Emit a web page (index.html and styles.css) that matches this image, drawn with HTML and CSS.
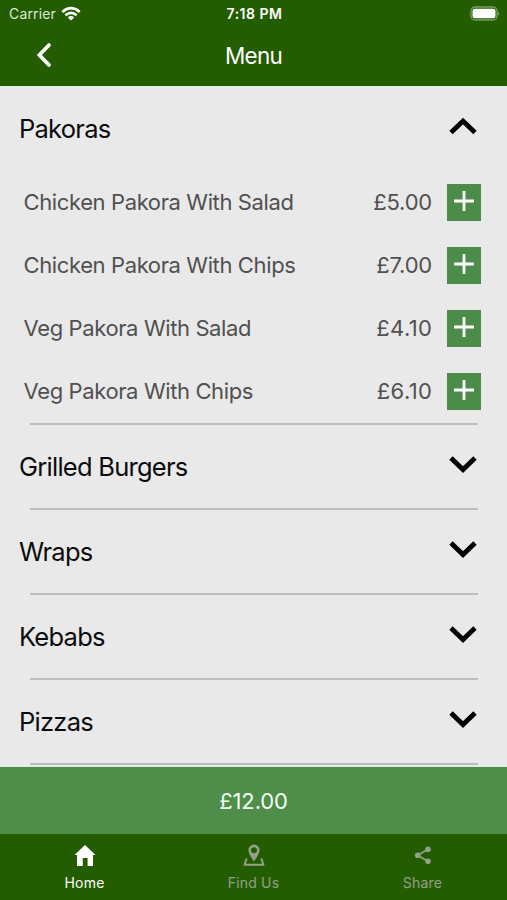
FILE: index.html
```html
<!DOCTYPE html>
<html lang="en">
<head>
<meta charset="utf-8">
<title>Menu</title>
<link rel="stylesheet" href="styles.css">
</head>
<body>
<div class="app">
  <header class="header">
    <div class="status">
      <div class="carrier"><span>Carrier</span>
        <svg width="20" height="16" viewBox="0 0 20 16"><g fill="none" stroke="#fff" stroke-width="2.7"><path d="M1.3 6Q10 -1.6 18.7 6"/><path d="M4.4 9.2Q10 4.6 15.6 9.2"/></g><path d="M6.8 11.4Q10 8.8 13.2 11.4L10 14.6Z" fill="#fff"/></svg>
      </div>
      <div class="time">7:18 PM</div>
      <svg class="battery" width="31" height="16" viewBox="0 0 31 16"><rect x="2" y="1" width="26" height="13" rx="4" fill="none" stroke="#76a05f" stroke-width="1.3"/><rect x="3.5" y="2.7" width="23" height="9.6" rx="2.3" fill="#fff"/><path d="M29 5.2Q31.5 7.5 29 9.8Z" fill="#76a05f"/></svg>
    </div>
    <div class="nav">
      <svg class="back" width="18" height="28" viewBox="0 0 18 28"><path d="M14 3L4.4 13L14 23" fill="none" stroke="#fff" stroke-width="3.8" stroke-linecap="round"/></svg>
      <h1>Menu</h1>
    </div>
  </header>
  <main class="list">
    <section class="group open">
      <div class="heading"><h2>Pakoras</h2><svg class="chev" viewBox="0 0 28 18"><path d="M2 15.5L14 4L26 15.5"/></svg></div>
      <div class="items">
        <div class="item"><span class="name">Chicken Pakora With Salad</span><span class="price">£5.00</span><button class="add" aria-label="Add"><svg viewBox="0 0 20 20"><path d="M10 0V20M0 10H20"/></svg></button></div>
        <div class="item"><span class="name">Chicken Pakora With Chips</span><span class="price">£7.00</span><button class="add" aria-label="Add"><svg viewBox="0 0 20 20"><path d="M10 0V20M0 10H20"/></svg></button></div>
        <div class="item"><span class="name">Veg Pakora With Salad</span><span class="price loose">£4.10</span><button class="add" aria-label="Add"><svg viewBox="0 0 20 20"><path d="M10 0V20M0 10H20"/></svg></button></div>
        <div class="item"><span class="name">Veg Pakora With Chips</span><span class="price loose">£6.10</span><button class="add" aria-label="Add"><svg viewBox="0 0 20 20"><path d="M10 0V20M0 10H20"/></svg></button></div>
      </div>
    </section>
    <section class="group"><div class="heading"><h2>Grilled Burgers</h2><svg class="chev" viewBox="0 0 28 18"><path d="M2 3L14 14.6L26 3"/></svg></div></section>
    <section class="group"><div class="heading"><h2>Wraps</h2><svg class="chev" viewBox="0 0 28 18"><path d="M2 3L14 14.6L26 3"/></svg></div></section>
    <section class="group"><div class="heading"><h2>Kebabs</h2><svg class="chev" viewBox="0 0 28 18"><path d="M2 3L14 14.6L26 3"/></svg></div></section>
    <section class="group"><div class="heading"><h2>Pizzas</h2><svg class="chev" viewBox="0 0 28 18"><path d="M2 3L14 14.6L26 3"/></svg></div></section>
  </main>
  <div class="total"><span>£12.00</span></div>
  <footer class="tabs">
    <div class="tab active"><svg width="24" height="24" viewBox="0 0 24 24"><path fill="currentColor" d="M12 1L22.5 11H20V22H14.6V14H9.8V22H4V11H1.5Z"/></svg><span>Home</span></div>
    <div class="tab"><svg width="24" height="24" viewBox="0 0 24 24"><path fill="currentColor" fill-rule="evenodd" d="M12 .5A5.6 5.6 0 0 0 6.4 6.1C6.4 10 12 17.5 12 17.5S17.6 10 17.6 6.1A5.6 5.6 0 0 0 12 .5ZM12 3.2A3 3 0 0 1 12 9.2A3 3 0 0 1 12 3.2Z"/><path d="M5.3 15.5H4.2L2.7 20.7H21.3L19.8 15.5H18.7" fill="none" stroke="currentColor" stroke-width="1.9"/></svg><span>Find Us</span></div>
    <div class="tab"><svg width="24" height="24" viewBox="0 0 24 24"><path d="M17.1 5.2L6.7 11.3L17.1 17.5" fill="none" stroke="currentColor" stroke-width="1.6"/><g fill="currentColor"><circle cx="17" cy="5.2" r="2.8"/><circle cx="6.7" cy="11.3" r="2.8"/><circle cx="17" cy="17.3" r="2.8"/></g></svg><span>Share</span></div>
  </footer>
</div>
</body>
</html>
```
FILE: styles.css
```css
* { box-sizing: border-box; }
body { margin: 0; font-family: Inter, "Liberation Sans", sans-serif; }
h1, h2 { margin: 0; font-weight: 400; }
svg { display: block; flex: none; }
.app { width: 507px; height: 900px; display: flex; flex-direction: column; overflow: hidden; background: #e9e9e9; }
.header { flex: none; height: 86px; background: #245d00; color: #fff; }
.status { display: grid; grid-template-columns: 1fr auto 1fr; height: 27px; align-items: center; padding: 0 7px 0 9px; }
.carrier { display: flex; gap: 5px; align-items: center; font-size: 14px; color: #dce8d6; letter-spacing: 0.15px; }
.time { font-size: 14px; font-weight: 600; letter-spacing: 0.5px; }
.battery { justify-self: end; }
.nav { display: grid; grid-template-columns: 1fr auto 1fr; height: 57px; align-items: center; }
.back { margin-left: 35px; }
.nav h1 { font-size: 22.5px; letter-spacing: -0.8px; grid-column: 2; }
.list { flex: none; height: 681px; overflow: hidden; }
.group::after { content: ""; display: block; height: 2px; margin: 0 29px 0 30px; background: #bebebe; }
.heading { height: 83px; padding: 0 30px 0 19px; display: flex; align-items: center; justify-content: space-between; }
.open .heading { padding-top: 2px; }
.heading h2 { font-size: 25.5px; line-height: 32px; letter-spacing: -0.75px; color: #0b0b0b; }
.chev { width: 28px; height: 18px; margin-top: -6px; fill: none; stroke: #000; stroke-width: 4.8; }
.items { padding: 2px 26px 0 24px; }
.item { height: 63px; display: grid; grid-template-columns: 1fr auto 34px; align-items: center; column-gap: 15px; font-size: 22px; color: #505050; }
.name, .price { padding-bottom: 1px; }
.name { letter-spacing: -0.38px; margin-left: -0.5px; }
.price { letter-spacing: -0.2px; }
.loose { letter-spacing: 0.4px; margin-right: -0.4px; }
.add { width: 34px; height: 37px; padding: 6px 7px 8px; border: 0; background: #4b8c49; }
.add svg { width: 20px; height: 20px; margin-top: -1px; stroke: #fff; stroke-width: 2.8; }
.total { flex: none; height: 67px; background: #4e8d4a; color: #f4fff2; display: flex; align-items: center; justify-content: center; font-size: 22px; letter-spacing: -0.1px; }
.tabs { flex: none; height: 66px; background: #245d00; display: grid; grid-template-columns: repeat(3, 1fr); }
.tab { display: flex; flex-direction: column; align-items: center; padding-top: 10px; color: #93a08b; font-size: 14px; line-height: 20px; letter-spacing: 0.2px; gap: 5px; }
.active { color: #fff; }
```
